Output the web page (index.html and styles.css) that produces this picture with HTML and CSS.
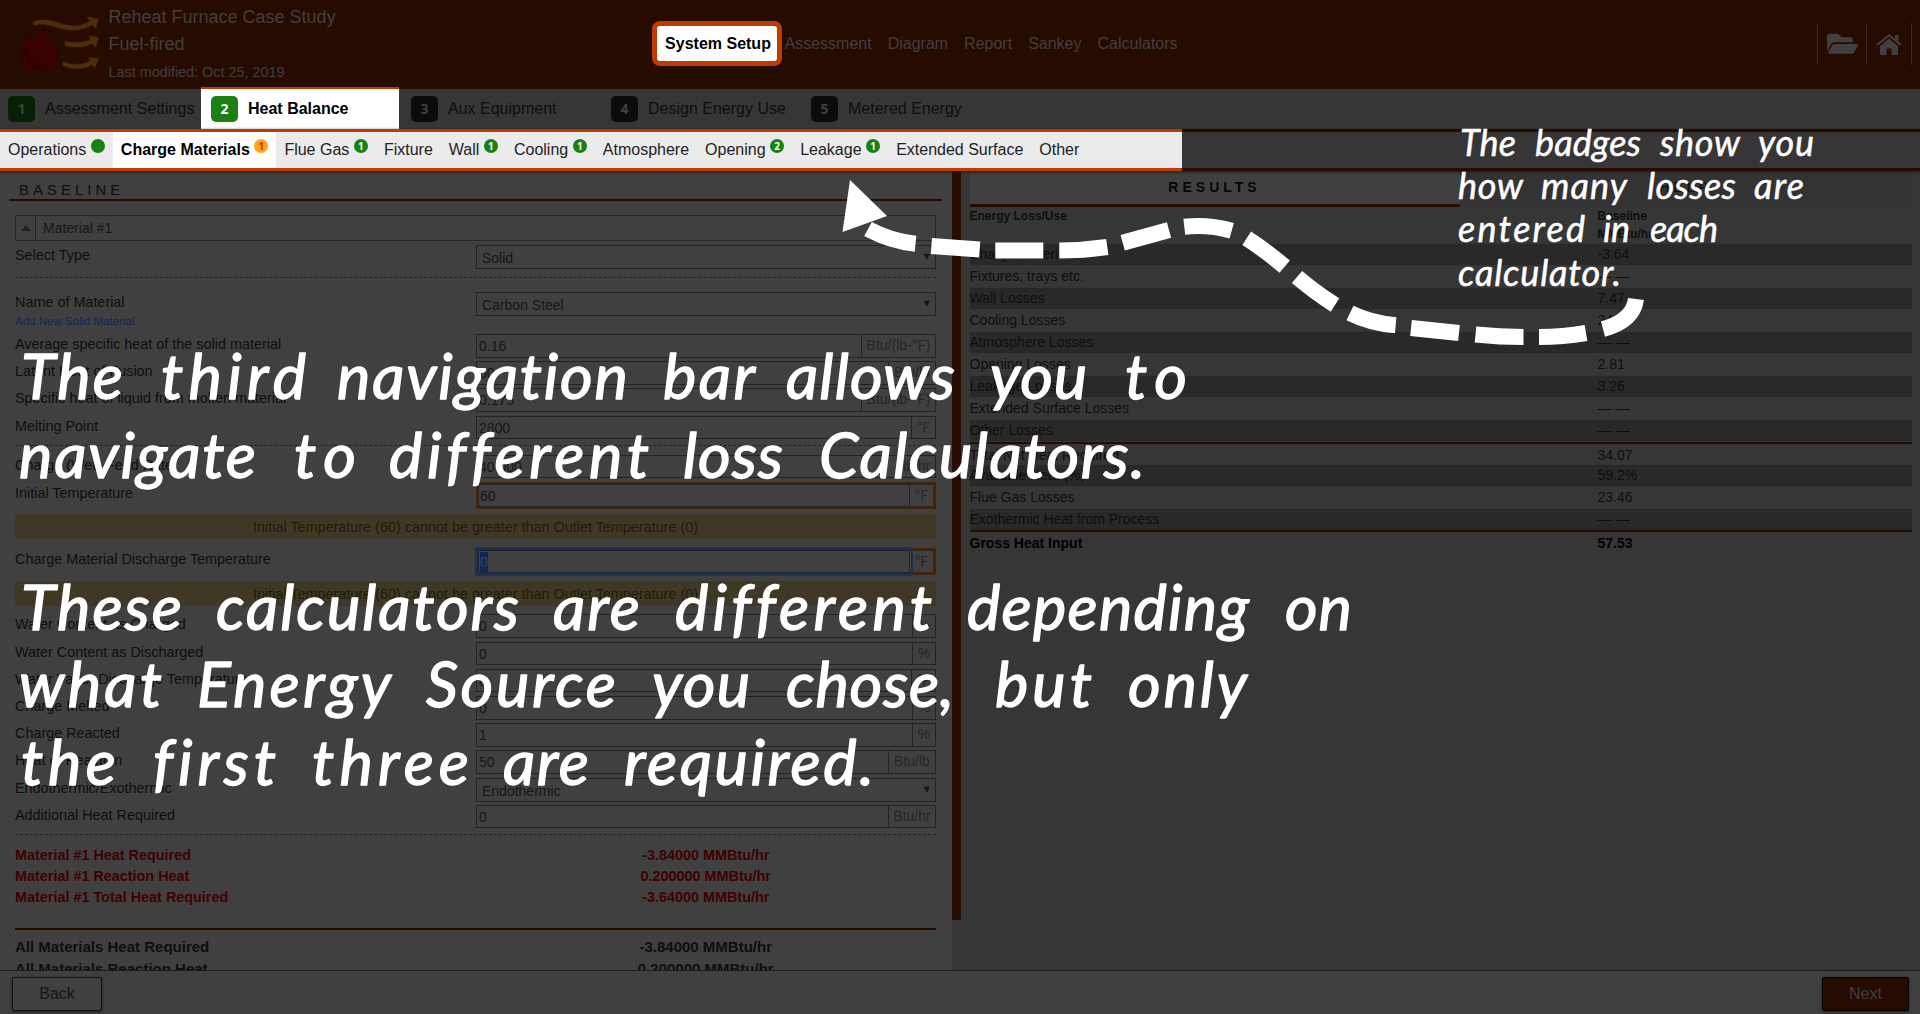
FILE: index.html
```html
<!DOCTYPE html>
<html lang="en">
<head>
<meta charset="utf-8">
<title>Reheat Furnace Case Study</title>
<link rel="stylesheet" href="styles.css">
</head>
<body>
<header class="top">
  <svg class="logo" viewBox="0 0 84 60" width="84" height="60">
    <g fill="#4d2e06" stroke="#291604" stroke-width="1">
      <path d="M13 9 C27 2 38 11 51 12 C59 13 66 11 70 8 L68 3 L80 6 L77 16 L73 12 C64 18 55 18 47 17 C35 15 25 9 15 13 Z"/>
      <path d="M45 27 C53 30 63 30 71 26 L69 22 L80 24 L77 35 L73 31 C64 36 54 35 46 33 Z"/>
      <path d="M44 48 C53 52 63 52 71 47 L68 44 L80 45 L76 56 L73 52 C64 58 53 57 43 53 Z"/>
    </g>
    <path d="M27 14.500 C26 21 27 26 29.500 30.500 C31 29 31.500 27.500 31 25.500 C36 30 39.500 36 39 42 C38.500 52 31 58 21 58 C10 58 2.500 50 2.500 41 C2.500 32 7.500 28 7 18.500 C10 22 11.500 26 12 30.500 C16 27 17 20 27 14.500Z" fill="#380001" stroke="#240504"/>
    <path d="M7 35 C5 45 11 53 22 55 C14 50 9 44 7 35Z" fill="#380001" stroke="#1f0302" stroke-width="1.2"/>
  </svg>
  <div class="titles">
    <div class="t1">Reheat Furnace Case Study</div>
    <div class="t1 t2">Fuel-fired</div>
    <div class="t3">Last modified: Oct 25, 2019</div>
  </div>
  <nav class="main-nav">
    <span class="current">System Setup</span><span>Assessment</span><span>Diagram</span><span>Report</span><span>Sankey</span><span>Calculators</span>
  </nav>
  <div class="tools">
    <span class="tool"><svg width="31" height="24" viewBox="0 0 576 448"><path fill="#404040" d="M572.7 260.1L500.3 384.2A48 48 0 0 1 458.8 408H45c-18.500 0-30.100-20.100-20.700-36.100L96.700 247.800A48 48 0 0 1 138.200 224H552c18.500 0 30.100 20.100 20.700 36.100zM138.200 192H480v-48c0-26.500-21.500-48-48-48H272l-64-64H48C21.500 32 0 53.500 0 80v278.500l69.100-118.400C83.400 215.600 109.900 192 138.200 192z"/></svg></span>
    <span class="tool home"><svg width="26" height="21" viewBox="0 0 26 21"><path fill="#404040" d="M13 4.500 L22 12 V20 Q22 21 21 21 H15.500 V14.500 H10.500 V21 H5 Q4 21 4 20 V12Z"/><path fill="none" stroke="#404040" stroke-width="2" d="M1 11 L13 1.300 L25 11"/><path fill="#404040" d="M19 1 H22.500 V8 L19 5Z"/></svg></span>
  </div>
</header>

<nav class="steps">
  <div class="step done"><b>1</b><span>Assessment Settings</span></div>
  <div class="step active"><b>2</b><span>Heat Balance</span></div>
  <div class="step"><b>3</b><span>Aux Equipment</span></div>
  <div class="step"><b>4</b><span>Design Energy Use</span></div>
  <div class="step"><b>5</b><span>Metered Energy</span></div>
</nav>

<nav class="losses">
  <div class="lit">
    <span>Operations<i></i></span><span class="on">Charge Materials<i class="warn">1</i></span><span>Flue Gas<i>1</i></span><span>Fixture</span><span>Wall<i>1</i></span><span>Cooling<i>1</i></span><span>Atmosphere</span><span>Opening<i>2</i></span><span>Leakage<i>1</i></span><span>Extended Surface</span><span>Other</span>
  </div>
</nav>

<main>
  <section class="form">
    <h2>BASELINE</h2>
    <div class="body">
      <div class="panel"><span class="toggle"></span>Material #1</div>
      <div class="row type"><label>Select Type</label><div class="select">Solid<em>▼</em></div></div>
      <div class="dash"></div>
      <div class="row name"><label>Name of Material<a>Add New Solid Material</a></label><div class="select">Carbon Steel<em>▼</em></div></div>
      <div class="row"><label>Average specific heat of the solid material</label><div class="input">0.16<u class="w75">Btu/(lb-℉)</u></div></div>
      <div class="row"><label>Latent Heat of Fusion</label><div class="input">60<u class="w48">Btu/lb</u></div></div>
      <div class="row"><label>Specific heat of liquid from molten material</label><div class="input">0.175<u class="w75">Btu/(lb-℉)</u></div></div>
      <div class="row"><label>Melting Point</label><div class="input">2800<u class="w25">℉</u></div></div>
      <div class="dash second"></div>
      <div class="row"><label>Charge (Wet)-Feed Rate</label><div class="input">40,000<u class="w39">lb/hr</u></div></div>
      <div class="row invalid"><label>Initial Temperature</label><div class="input"><span class="val">60</span><u class="w25">℉</u></div></div>
      <div class="alert">Initial Temperature (60) cannot be greater than Outlet Temperature (0)</div>
      <div class="row invalid focus"><label>Charge Material Discharge Temperature</label><div class="input"><span class="val"><mark>0</mark></span><u class="w25">℉</u></div></div>
      <div class="alert last">Initial Temperature (60) cannot be greater than Outlet Temperature (0)</div>
      <div class="row"><label>Water Content as Charged</label><div class="input">0<u class="w24">%</u></div></div>
      <div class="row"><label>Water Content as Discharged</label><div class="input">0<u class="w24">%</u></div></div>
      <div class="row"><label>Water Vapor Discharge Temperature</label><div class="input">0<u class="w25">℉</u></div></div>
      <div class="row"><label>Charge Melted</label><div class="input">0<u class="w24">%</u></div></div>
      <div class="row"><label>Charge Reacted</label><div class="input">1<u class="w24">%</u></div></div>
      <div class="row"><label>Heat of Reaction</label><div class="input">50<u class="w48">Btu/lb</u></div></div>
      <div class="row"><label>Endothermic/Exothermic</label><div class="select">Endothermic<em>▼</em></div></div>
      <div class="row add"><label>Additional Heat Required</label><div class="input">0<u class="w48">Btu/hr</u></div></div>
      <div class="dash third"></div>
      <div class="sum red"><span>Material #1 Heat Required</span><span>-3.84000 MMBtu/hr</span></div>
      <div class="sum red"><span>Material #1 Reaction Heat</span><span>0.200000 MMBtu/hr</span></div>
      <div class="sum red"><span>Material #1 Total Heat Required</span><span>-3.64000 MMBtu/hr</span></div>
      <div class="rule"></div>
      <div class="sum all"><span>All Materials Heat Required</span><span>-3.84000 MMBtu/hr</span></div>
      <div class="sum all"><span>All Materials Reaction Heat</span><span>0.200000 MMBtu/hr</span></div>
    </div>
  </section>
  <div class="scroll"><div class="thumb"></div></div>
  <section class="results">
    <div class="tabs"><div class="tab open">RESULTS</div><div class="tab help">HELP</div></div>
    <div class="table">
      <div class="line head"><span>Energy Loss/Use</span><span>Baseline<br>MMBtu/hr</span></div>
      <div class="line odd"><span>Charge Materials</span><span>-3.64</span></div>
      <div class="line"><span>Fixtures, trays etc.</span><span>— —</span></div>
      <div class="line odd"><span>Wall Losses</span><span>7.47</span></div>
      <div class="line"><span>Cooling Losses</span><span>24.17</span></div>
      <div class="line odd"><span>Atmosphere Losses</span><span>— —</span></div>
      <div class="line"><span>Opening Losses</span><span>2.81</span></div>
      <div class="line odd"><span>Leakage Losses</span><span>3.26</span></div>
      <div class="line"><span>Extended Surface Losses</span><span>— —</span></div>
      <div class="line odd"><span>Other Losses</span><span>— —</span></div>
      <div class="line topline"><span>Total Net Heat Required</span><span>34.07</span></div>
      <div class="line odd"><span>Available Heat (%)</span><span>59.2%</span></div>
      <div class="line"><span>Flue Gas Losses</span><span>23.46</span></div>
      <div class="line odd"><span>Exothermic Heat from Process</span><span>— —</span></div>
      <div class="line topline gross"><span>Gross Heat Input</span><span>57.53</span></div>
    </div>
  </section>
</main>

<footer><span class="btn">Back</span><span class="btn next">Next</span></footer>

<svg class="guide" width="1920" height="1014" viewBox="0 0 1920 1014">
  <path class="head-tip" d="M850 180 L887 216 L842.500 232Z"/>
  <path class="trail" d="M1636 299 C1634 314 1622 324 1603 329 M1586 333 Q1563 337 1539 337 M1523.500 337 Q1500 337 1475.500 334.500 M1459 333 L1411 328 M1395.700 325.300 Q1370 323 1350 313 M1335 305 Q1316 293 1297 277 M1284.700 266.700 Q1265 250 1246.700 238.300 M1231.700 230.700 Q1208 224 1184.300 226.700 M1169 230 L1122.700 242.700 M1107.300 247 Q1083 250.500 1059.300 250.500 M1043.300 250.500 H995.300 M979.700 249.500 L931.400 246 M915.500 243.700 Q890 241 868 229"/>
  <g class="small">
    <text x="1460" y="156" textLength="56">The</text><text x="1535" y="156" textLength="106">badges</text><text x="1660" y="156" textLength="80">show</text><text x="1758" y="156" textLength="56">you</text>
    <text x="1458" y="199" textLength="65">how</text><text x="1541" y="199" textLength="86">many</text><text x="1647" y="199" textLength="89">losses</text><text x="1754" y="199" textLength="50">are</text>
    <text x="1458" y="242" textLength="127">entered</text><text x="1603" y="242" textLength="27">in</text><text x="1650" y="242" textLength="68">each</text>
    <text x="1458" y="286" textLength="163">calculator.</text>
  </g>
  <g class="big">
    <text x="21" y="399" textLength="102">The</text><text x="161" y="399" textLength="145">third</text><text x="337" y="399" textLength="291">navigation</text><text x="663" y="399" textLength="92">bar</text><text x="786" y="399" textLength="169">allows</text><text x="990" y="399" textLength="97">you</text><text x="1125" y="399" textLength="62">to</text>
    <text x="19" y="478" textLength="237">navigate</text><text x="294" y="478" textLength="62">to</text><text x="389" y="478" textLength="260">different</text><text x="683" y="478" textLength="100">loss</text><text x="819" y="478" textLength="326">Calculators.</text>
    <text x="21" y="630" textLength="161">These</text><text x="216" y="630" textLength="303">calculators</text><text x="553" y="630" textLength="87">are</text><text x="675" y="630" textLength="257">different</text><text x="967" y="630" textLength="282">depending</text><text x="1285" y="630" textLength="67">on</text>
    <text x="19" y="707" textLength="143">what</text><text x="197" y="707" textLength="194">Energy</text><text x="426" y="707" textLength="190">Source</text><text x="652" y="707" textLength="98">you</text><text x="786" y="707" textLength="168">chose,</text><text x="995" y="707" textLength="97">but</text><text x="1128" y="707" textLength="119">only</text>
    <text x="21" y="785" textLength="95">the</text><text x="153" y="785" textLength="123">first</text><text x="312" y="785" textLength="157">three</text><text x="503" y="785" textLength="86">are</text><text x="624" y="785" textLength="250">required.</text>
  </g>
</svg>
</body>
</html>
```
FILE: styles.css
```css
* { box-sizing: border-box; }
body { margin: 0; width: 1920px; height: 1014px; overflow: hidden; position: relative; display: flex; flex-direction: column; background: #363636; color: #0e0e0e; font-family: "Liberation Sans", Arial, sans-serif; }

.top { flex: none; height: 89px; background: #260b00; color: #404040; display: flex; }
.logo { flex: none; margin: 13px 0 0 19px; width: 84px; }
.titles { width: 549px; padding: 4px 0 0 5.5px; }
.t1 { font-size: 18px; line-height: 27px; }
.t3 { font-size: 14.4px; line-height: 20px; margin-top: 4px; }
.main-nav { display: flex; align-items: center; height: 87px; font-size: 16px; }
.main-nav span { padding: 0 8px; line-height: 46px; }
.main-nav .current { width: 130px; margin-right: -5.500px; border: 5px solid #bd3c00; border-radius: 8px; background: #fff; color: #000; font-weight: bold; line-height: 35px; height: 45px; padding: 0 0 0 2px; text-align: center; }
.tools { margin: 23px 8px 0 auto; display: flex; height: 42px; border-right: 1px solid #402a22; }
.tool { width: 49px; border-left: 1px solid #402a22; display: flex; align-items: center; padding-left: 9px; }
.home { width: 45px; padding-left: 9px; }

.steps { flex: none; height: 40px; background: #363636; display: flex; padding-left: 1px; }
.step { width: 200px; padding-left: 10px; font-size: 16px; line-height: 20px; white-space: nowrap; display: flex; align-items: center; }
.step span { margin-top: -1px; }
.step b { width: 27px; height: 26px; border-radius: 5px; background: #0c0c0c; color: #404040; font: bold 14px/26px "Open Sans", sans-serif; text-align: center; margin-right: 10px; }
.step.done { padding-left: 7px; }
.step.done b { background: #062006; }
.step.active { width: 198px; margin: -2px 2px 0 0; background: #fff; color: #000; border-top: 2px solid #bd3c00; font-weight: bold; }
.step.active b { background: #1a8014; color: #fff; }

.losses { flex: none; height: 42px; border: solid #260b00; border-width: 3px 0; background: #363636; box-shadow: 0 1px 3px #1a1a1a; position: relative; }
.lit { width: 1182px; height: 42px; margin-top: -3px; border: solid #bd3c00; border-width: 3px 0; background: #ebebeb; color: #222; font-size: 16px; line-height: 36px; display: flex; }
.lit span { padding: 0 8px; display: flex; white-space: nowrap; }
.lit span.on { background: #fff; color: #000; font-weight: bold; }
.lit i { width: 14px; height: 14px; margin: 7px 0 0 4.600px; border-radius: 50%; background: #1a8014; color: #fff; font: bold 10px/14px "Open Sans", sans-serif; text-align: center; }
.lit i.warn { background: #ffa617; color: #f01800; }

main { flex: 1; min-height: 0; display: flex; }
.form { flex: none; width: 952px; background: #404040; overflow: hidden; }
h2 { margin: 0 10px 0 9px; height: 30px; padding: 8px 0 0 10px; font-size: 15px; font-weight: normal; line-height: 21px; letter-spacing: 4px; border-bottom: 2px solid #260b00; }
.body { padding: 14px 16px 0 15px; }
.panel { height: 26px; border: 1px solid #262626; font-size: 14px; line-height: 25px; display: flex; color: #161616; }
.toggle { width: 20px; border-right: 1px solid #262626; margin-right: 7px; display: flex; align-items: center; justify-content: center; }
.toggle::before { content: ""; border: 5px solid transparent; border-top: 0; border-bottom: 6px solid #222; }
.row { display: flex; height: 27.200px; }
.row label { width: 461px; font-size: 14.400px; line-height: 21px; }
.row a { display: block; font-size: 11.500px; line-height: 16px; color: #12265e; }
.input, .select { width: 460px; height: 23.500px; border: 1px solid #232323; font-size: 14px; line-height: 23px; padding-left: 2px; display: flex; justify-content: space-between; color: #161616; }
.select { height: 24px; padding: 0 5px 0 5px; line-height: 24px; }
.select em { font: 8px/22px "DejaVu Sans", sans-serif; }
.input u { text-decoration: none; border-left: 1px solid #232323; color: #262626; text-align: center; line-height: 21px; font-family: "Liberation Sans", "Noto Sans CJK SC", sans-serif; }
.w75 { width: 74px; } .w48 { width: 47px; } .w39 { width: 38px; } .w25 { width: 24px; } .w24 { width: 23px; }
.type { margin-top: 4px; height: 32px; }
.dash { height: 15px; border-top: 1px dashed #232323; }
.name { height: 42px; }
.dash.second { margin-top: 2px; height: 10px; }
.invalid { height: 32.500px; }
.invalid label { line-height: 22px; }
.invalid .input { height: 27px; border: 2px solid #4a2200; padding: 0; }
.invalid .val { flex: 1; border: 1px solid #232323; padding-left: 1px; line-height: 23px; }
.invalid u { border: 1px solid #2a2622; border-left: 0; }
.focus .val { border: 1px solid #1d2433; outline: 2px solid #222f4d; outline-offset: 1px; line-height: 23px; }
mark { background: #10265a; color: #404040; padding: 2px 0; }
.alert { height: 25px; margin-bottom: 8.500px; background: #3f3826; color: #211c08; font-size: 14.400px; line-height: 26px; text-align: center; }
.focus { height: 33px; }
.row.add { height: 29px; }
.dash.third { height: 11px; }
.sum { height: 21px; display: flex; font-size: 14.400px; font-weight: bold; line-height: 21px; }
.sum span:first-child { width: 461px; }
.sum span:last-child { width: 461px; text-align: center; }
.red { color: #400000; }
.rule { border-top: 2px solid #260b00; margin: 20px 0 6px; }
.all { height: 22px; font-size: 15px; }

.scroll { flex: none; width: 9px; background: #363636; }
.thumb { width: 8.500px; height: 749px; background: #260b00; }
.results { flex: 1; padding: 0 8px 0 8.500px; }
.tabs { display: flex; height: 36px; font-size: 14px; letter-spacing: 4px; text-align: center; line-height: 33px; }
.tab { width: 452px; }
.open { width: 490px; background: #404040; border-bottom: 3px solid #260b00; font-weight: bold; color: #060606; }
.help { background: #333; }
.line { display: flex; height: 22px; font-size: 14px; line-height: 21px; border-bottom: 1px solid #343434; }
.line span:first-child { width: 628px; }
.line.head { height: 37px; font-size: 12px; font-weight: bold; line-height: 18px; }
.odd { background: #292929; }
.topline { border-top: 2px solid #260b00; margin-top: -.5px; height: 23px; line-height: 22px; }
.gross { font-weight: bold; color: #000; line-height: 23px; }

footer { flex: none; height: 44px; border-top: 1px solid #1c1c1c; background: #404040; display: flex; justify-content: space-between; padding: 6px 11px 0 12px; z-index: 1; }
.btn { width: 90px; height: 34px; border: 1px solid #111; border-radius: 2px; font-size: 16px; line-height: 31px; text-align: center; box-shadow: 0 1px 3px #222; color: #161616; }
.next { width: 87px; background: #260b00; border-color: #000; color: #404040; }

.guide { position: absolute; left: 0; top: 0; z-index: 2; fill: #fff; }
.trail { fill: none; stroke: #fff; stroke-width: 16; }
.small, .big { font-family: Lato, sans-serif; font-style: italic; font-weight: 400; font-variant-ligatures: none; stroke: #fff; stroke-linejoin: round; }
.small { font-size: 36px; stroke-width: .5px; }
.big { font-size: 63px; stroke-width: 1.3px; }
```
